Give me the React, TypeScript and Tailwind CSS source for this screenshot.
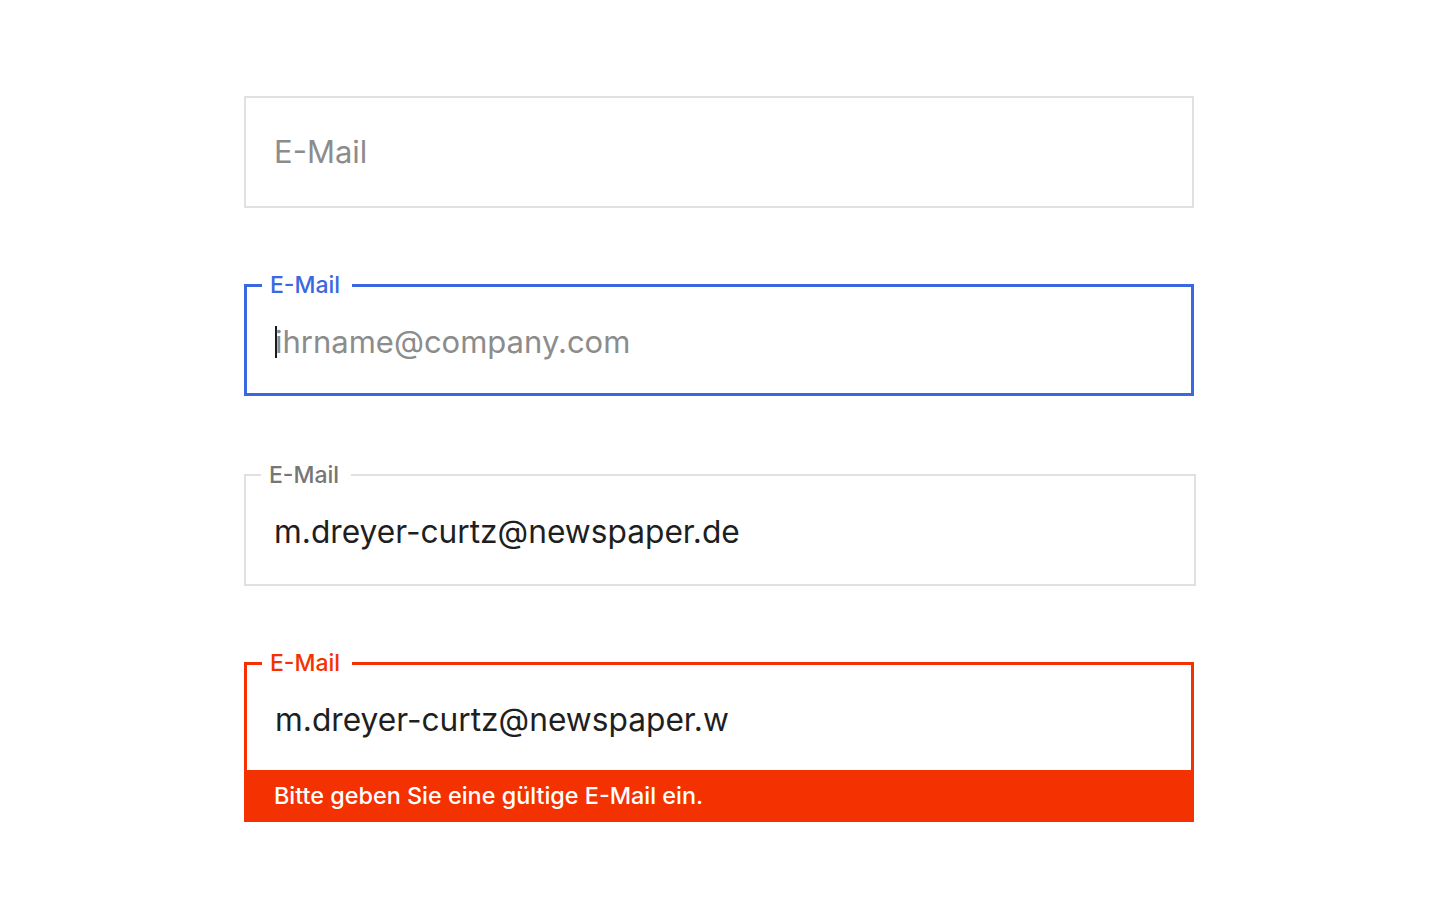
import { useState } from "react";

type FieldState = "idle" | "focus" | "filled" | "error";

const borderFor: Record<FieldState, string> = {
  idle: "border-2 border-[#e1e1e1]",
  focus: "border-[3px] border-[#3a67e2]",
  filled: "border-2 border-[#e1e1e1]",
  error: "border-[3px] border-b-0 border-[#f43100]",
};

const labelFor: Record<FieldState, string> = {
  idle: "text-[#767676]",
  focus: "text-[#3a67e2]",
  filled: "text-[#767676]",
  error: "text-[#f43100]",
};

// body height under the legend, text pushed slightly up when a legend is shown
const bodyFor: Record<FieldState, string> = {
  idle: "h-[108px]",
  focus: "h-[94px] pb-[9px]",
  filled: "h-[96px] pb-[9px]",
  error: "h-[93px] pb-[7px]",
};

function EmailField({
  state,
  value,
  placeholder,
  error,
  className = "",
}: {
  state: FieldState;
  value: string;
  placeholder: string;
  error?: string;
  className?: string;
}) {
  const [text, setText] = useState(value);
  const showLabel = state !== "idle";

  return (
    <div className={className}>
      <fieldset className={`m-0 min-w-0 p-0 ${borderFor[state]}`}>
        {showLabel && (
          <legend
            className={`ml-[15px] pl-2 pr-3 text-[23px] font-medium ${
              state === "filled" ? "leading-[26px]" : "leading-[27px]"
            } ${labelFor[state]}`}
          >
            E-Mail
          </legend>
        )}
        <div className={`flex items-center pl-7 pr-7 ${bodyFor[state]}`}>
          {state === "focus" && <span className="h-8 w-[2px] shrink-0 bg-[#1a1a1a]" />}
          <input
            type="email"
            value={text}
            onChange={(e) => setText(e.target.value)}
            placeholder={placeholder}
            className={`w-full bg-transparent text-[31.7px] text-[#1f1f1f] outline-none placeholder:text-[31px] placeholder:text-[#8c8c8c] ${
              state === "focus" ? "-ml-[2px]" : ""
            }`}
          />
        </div>
      </fieldset>
      {error && (
        <div className="flex h-[52px] items-center bg-[#f43100] px-[30px] text-[23.4px] font-medium text-white">
          {error}
        </div>
      )}
    </div>
  );
}

export default function App() {
  return (
    <div
      className="min-h-screen bg-white pt-[96px]"
      style={{ fontFamily: "Inter, 'Noto Sans', sans-serif" }}
    >
      <div className="ml-[244px] flex w-[950px] flex-col">
        <EmailField state="idle" value="" placeholder="E-Mail" />
        <EmailField className="mt-16" state="focus" value="" placeholder="ihrname@company.com" />
        <EmailField
          className="mt-[66px] w-[952px]"
          state="filled"
          value="m.dreyer-curtz@newspaper.de"
          placeholder="ihrname@company.com"
        />
        <EmailField
          className="mt-16"
          state="error"
          value="m.dreyer-curtz@newspaper.w"
          placeholder="ihrname@company.com"
          error="Bitte geben Sie eine gültige E-Mail ein."
        />
      </div>
    </div>
  );
}
